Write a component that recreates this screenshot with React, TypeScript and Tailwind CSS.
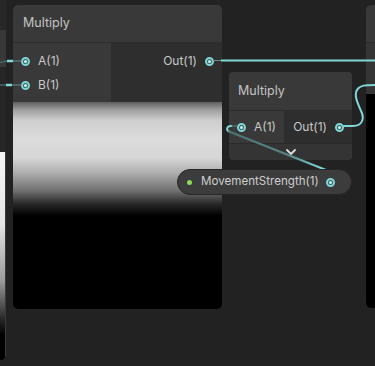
import React from "react";

function Port() {
  return (
    <span className="w-[9px] h-[9px] shrink-0 rounded-full border-2 border-[#7fd4d4] flex items-center justify-center bg-[#3a5f5f]">
      <span className="w-[3px] h-[3px] rounded-full bg-[#c4f2f2]" />
    </span>
  );
}

export default function App() {
  return (
    <div className="relative w-[375px] h-[366px] overflow-hidden bg-[#222222] font-['Inter','Roboto',sans-serif] text-[#c8c8c8]">
      {/* left partial node */}
      <div className="absolute left-[-30px] top-[-10px] w-[36px] h-[370px] flex flex-col rounded-br-[5px] overflow-hidden">
        <div className="h-[40px] bg-[#272727]" />
        <div className="h-[37px] bg-[#383838]" />
        <div className="h-[85px] bg-[#262626]" />
        <div className="flex-1 border-r border-[#3a3a3a] bg-[linear-gradient(to_bottom,#f4f4f4_0%,#e4e4e4_35%,#9a9a9a_62%,#2a2a2a_80%,#000_88%,#000_100%)]" />
      </div>

      {/* main Multiply node */}
      <div className="absolute left-[13px] top-[5px] w-[209px] h-[304px] flex flex-col rounded-[5px] overflow-hidden bg-[#2a2a2a]">
        <div className="h-[37px] shrink-0 bg-[#393939] flex items-center pl-[10px] text-[12.5px] text-[#c4c4c4]">
          Multiply
        </div>
        <div className="h-[60px] shrink-0 flex border-t border-[#2c2c2c]">
          <div className="w-[98px] bg-[#393939] flex flex-col pt-[6px]">
            <div className="h-[24px] flex items-center pl-[8px] gap-[8px] text-[12px]">
              <Port />
              <span>A(1)</span>
            </div>
            <div className="h-[24px] flex items-center pl-[8px] gap-[8px] text-[12px]">
              <Port />
              <span>B(1)</span>
            </div>
          </div>
          <div className="flex-1 bg-[#2e2e2e] flex flex-col pt-[6px]">
            <div className="h-[24px] flex items-center justify-end pr-[8px] gap-[8px] text-[12px]">
              <span>Out(1)</span>
              <Port />
            </div>
          </div>
        </div>
        <div className="flex-1 bg-[linear-gradient(to_bottom,#5f5f5f_0%,#a0a0a0_4%,#cfcfcf_9%,#dcdcdc_18%,#d6d6d6_27%,#c0c0c0_31%,#b0b0b0_34%,#6f6f6f_43%,#2a2a2a_49%,#000_55%,#000_100%)]" />
      </div>

      {/* right partial node */}
      <div className="absolute left-[366px] top-[5px] w-[30px] h-[303px] flex flex-col rounded-[5px] overflow-hidden">
        <div className="h-[37px] shrink-0 bg-[#393939]" />
        <div className="h-[52px] shrink-0 bg-[#353535] border-t border-[#2c2c2c]" />
        <div className="flex-1 bg-black" />
      </div>

      {/* second Multiply node */}
      <div className="absolute left-[229px] top-[72px] w-[123px] h-[88px] flex flex-col rounded-[4px] overflow-hidden bg-[#2e2e2e]">
        <div className="h-[38px] shrink-0 bg-[#393939] flex items-center pl-[9px] text-[12.5px] text-[#c4c4c4]">
          Multiply
        </div>
        <div className="h-[33px] shrink-0 flex border-t border-[#2c2c2c]">
          <div className="w-[55px] bg-[#393939] flex items-center pl-[8px] gap-[8px] text-[12px]">
            <Port />
            <span>A(1)</span>
          </div>
          <div className="flex-1 bg-[#2e2e2e] flex items-center justify-end pr-[8px] gap-[8px] text-[12px]">
            <span>Out(1)</span>
            <Port />
          </div>
        </div>
        <div className="flex-1 bg-[#343434] border-t border-[#2a2a2a] flex items-center justify-center">
          <svg width="10" height="6" viewBox="0 0 10 6" fill="none">
            <path d="M1 1 L5 5 L9 1" stroke="#dcdcdc" strokeWidth="1.8" strokeLinecap="round" strokeLinejoin="round" />
          </svg>
        </div>
      </div>

      {/* wires */}
      <svg className="absolute left-0 top-0 pointer-events-none" width="375" height="366" viewBox="0 0 375 366" fill="none">
        <defs>
          <linearGradient id="diag" x1="229" y1="131" x2="326" y2="170" gradientUnits="userSpaceOnUse">
            <stop offset="0" stopColor="#4d7272" />
            <stop offset="0.6" stopColor="#5a8686" />
            <stop offset="1" stopColor="#80dcdc" />
          </linearGradient>
        </defs>
        <path d="M0 62.5 L7 61" stroke="#4f7878" strokeWidth="1.2" />
        <path d="M7 61 H13" stroke="#80d8d8" strokeWidth="2.5" />
        <path d="M13 61 H22" stroke="#6d8c8c" strokeWidth="1" />
        <path d="M0 85 H6" stroke="#4f7878" strokeWidth="1.2" />
        <path d="M6 85 H12" stroke="#80d8d8" strokeWidth="2.5" />
        <path d="M12 85 H22" stroke="#6d8c8c" strokeWidth="1" />
        <path d="M213 60.5 H221" stroke="#6d8c8c" strokeWidth="1" />
        <path d="M221 60.5 H375" stroke="#80d8d8" strokeWidth="2.2" />
        <path d="M237.5 126 H231" stroke="#6d8c8c" strokeWidth="1" />
        <path d="M231 126 C226.5 126 226 130 229 131.5" stroke="#80d8d8" strokeWidth="2" strokeLinecap="round" />
        <path d="M229 131.5 L326 170" stroke="url(#diag)" strokeWidth="2" strokeLinecap="round" />
        <path d="M344 126 H353 C362 126 364.5 119 361.5 112 C357.5 103 353 94 358 88.5 C361 85.5 364 85 375 85" stroke="#80d8d8" strokeWidth="2" strokeLinecap="round" />
      </svg>

      {/* MovementStrength property pill */}
      <div className="absolute left-[177px] top-[169px] w-[175px] h-[26px] rounded-full bg-[#3c3c3c] border border-[#262626] flex items-center pl-[9px] pr-[16px]">
        <span className="w-[5px] h-[5px] rounded-full bg-[#8fd95a] shrink-0" />
        <span className="ml-[9px] flex-1 text-[11.6px] text-[#cdcdcd] whitespace-nowrap">MovementStrength(1)</span>
        <Port />
      </div>
    </div>
  );
}
